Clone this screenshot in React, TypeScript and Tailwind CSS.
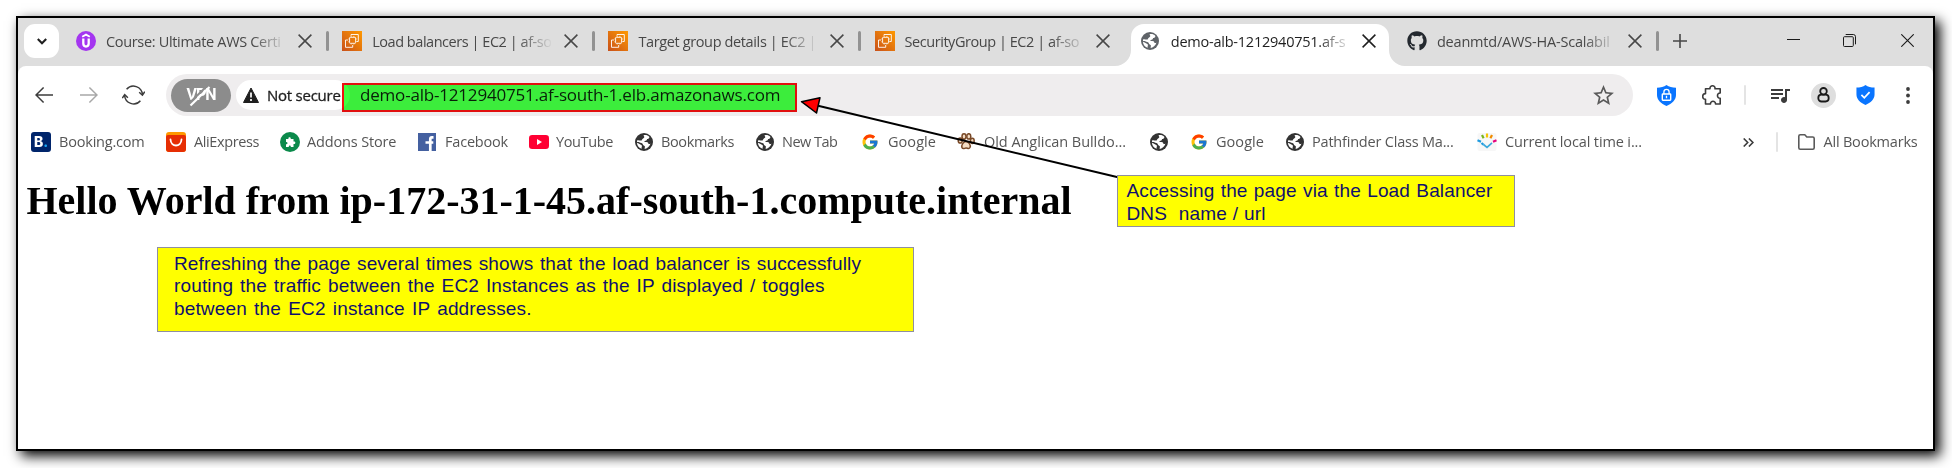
import type { ReactNode } from "react";
import { MdQueueMusic, MdStarOutline } from "react-icons/md";
import { FcGoogle } from "react-icons/fc";
import { FaGithub } from "react-icons/fa";

function Cross({ className }: { className: string }) {
  return (
    <svg viewBox="0 0 14 14" className={`block size-3.5 shrink-0 ${className}`} fill="none" stroke="currentColor" strokeWidth="1.5">
      <path d="M.6.6l12.8 12.8M13.4.6L.6 13.4" />
    </svg>
  );
}

function Globe({ className }: { className: string }) {
  return (
    <svg viewBox="0 0 18 18" className={`block size-[18px] shrink-0 ${className}`}>
      <circle cx="9" cy="9" r="9" fill="currentColor" />
      <path
        fill="#fff"
        d="M8.600 2.300C10.500 1.700 13 2.300 14.400 3.900c-.2 1.500-1 2.100-2.300 2.100-.3 1.500-1.200 2-2.600 1.900-.2 1.100.4 1.300 1.600 1.200 1.800-.1 2.200.8 2.400 1.900.8.300 1.500 0 2-.5-.9 2.800-2.900 4.800-5.700 5.400-.5-1 .3-1.600.1-2.500-.3-1-1.700-.8-2-2C7.600 9.900 5.500 9.800 4.300 9.200 3.500 8.800 2.700 8.900 1.900 9.300c.1-.9.300-1.700.6-2.400 1.200.4 2.300.8 3.700.7.8-.1.600-1.100 1.300-1.700.8-.7 1.900-.9 1.800-1.900 0-.6-.8-.8-.7-1.700z"
      />
      <path fill="#fff" d="M1.900 10c1.600-.1 2.600 1.200 4 1.700 1.200.4 1.300 1.400.8 2.300-.3.700-.1 1.300.1 1.800C4.100 15 2.200 12.800 1.900 10z" />
    </svg>
  );
}

function Udemy() {
  return (
    <svg viewBox="0 0 20 20" className="block size-5">
      <circle cx="10" cy="10" r="10" fill="#a435f0" />
      <path d="M6.200 5.800L10 3.600l3.800 2.200" fill="none" stroke="#fff" strokeWidth="1.800" />
      <path d="M7.300 7.600v5c0 3.900 5.400 3.900 5.400 0v-5" fill="none" stroke="#fff" strokeWidth="2.300" />
    </svg>
  );
}

function Ec2() {
  return (
    <svg viewBox="0 0 20 20" className="block size-5">
      <defs>
        <linearGradient id="ec2" x1="0" y1="1" x2="1" y2="0">
          <stop offset="0" stopColor="#c8511b" />
          <stop offset="1" stopColor="#f90" />
        </linearGradient>
      </defs>
      <path fill="url(#ec2)" d="M0 0h20v20H0z" />
      <g fill="none" stroke="#fff" strokeWidth="1" strokeOpacity=".9">
        <rect x="7.600" y="6.300" width="6" height="6" rx=".6" />
        <path d="M9 4.800V3.500h7.300v7h-1.400M6 9H3.500v7.300h7.200V14" />
        <path d="M9.200 5v1M11.800 5v1M13.900 8h1M13.900 10.500h1M6.300 8h1M6.300 10.800h1M9.200 12.600v1M11.800 12.600v1" strokeWidth=".7" />
      </g>
    </svg>
  );
}

type TabData = { title: string; tracking: string; icon: ReactNode };

const tabs: TabData[] = [
  { title: "Course: Ultimate AWS Certi", tracking: "tracking-[-0.33px]", icon: <Udemy /> },
  { title: "Load balancers | EC2 | af-so", tracking: "tracking-[-0.46px]", icon: <Ec2 /> },
  { title: "Target group details | EC2 |", tracking: "tracking-[-0.37px]", icon: <Ec2 /> },
  { title: "SecurityGroup | EC2 | af-so", tracking: "tracking-[-0.45px]", icon: <Ec2 /> },
  { title: "demo-alb-1212940751.af-s", tracking: "tracking-[-0.23px]", icon: <Globe className="text-[#5f6368]" /> },
  { title: "deanmtd/AWS-HA-Scalabil", tracking: "tracking-[-0.2px]", icon: <FaGithub className="size-5 text-[#24292f]" /> },
];

const ACTIVE = 4;

function Tab({ tab, index }: { tab: TabData; index: number }) {
  const active = index === ACTIVE;
  return (
    <div className="relative flex h-[48px] w-[266.2px] shrink-0 items-center pb-0.5 pl-3.5">
      {active && (
        <div className="absolute top-1.5 bottom-0 left-[4px] w-[258.5px] rounded-t-[13px] bg-white">
          <svg viewBox="0 0 16 16" className="absolute bottom-0 -left-4 block size-4"><path d="M16 0v16H0A16 16 0 0 0 16 0z" fill="#fff" /></svg>
          <svg viewBox="0 0 16 16" className="absolute -right-4 bottom-0 block size-4"><path d="M0 0v16h16A16 16 0 0 1 0 0z" fill="#fff" /></svg>
        </div>
      )}
      <div className="relative flex w-[30px] shrink-0 items-center">{tab.icon}</div>
      <div
        className={`relative mt-px w-[179px] shrink-0 text-[14.5px] leading-6 whitespace-nowrap [mask-image:linear-gradient(to_right,black_146px,transparent_181px)] ${tab.tracking} ${active ? "text-[#1f1f1f]" : "text-[#474747]"}`}
      >
        {tab.title}
      </div>
      <Cross className={`relative ml-[12.5px] ${active ? "text-[#1f1f1f]" : "text-[#474747]"}`} />
      {index !== ACTIVE && index !== ACTIVE - 1 && <span className="ml-[14px] h-5 w-[3px] shrink-0 rounded-full bg-[#929292]" />}
    </div>
  );
}

function TabStrip() {
  return (
    <div className="flex h-12 shrink-0 items-center bg-[#dedede]">
      <div className="mr-[3px] mb-0.5 ml-1.5 flex h-[34px] w-[35px] shrink-0 items-center justify-center rounded-[11px] bg-white">
        <svg viewBox="0 0 10 7" className="block h-[7px] w-2.5" fill="none" stroke="#1f1f1f" strokeWidth="2.1"><path d="M.8 1L5 5.2 9.2 1" /></svg>
      </div>
      {tabs.map((t, i) => (
        <Tab key={t.title} tab={t} index={i} />
      ))}
      <svg viewBox="0 0 14 14" className="mb-0.5 ml-[14px] block size-3.5 shrink-0" fill="none" stroke="#474747" strokeWidth="1.6"><path d="M7 0v14M0 7h14" /></svg>
      <div className="mr-[19px] mb-[3px] ml-auto flex items-center text-[#1a1a1a]">
        <svg viewBox="0 0 13 13" className="mr-[43px] block size-[13px]" stroke="currentColor"><path d="M0 5.5h13" /></svg>
        <svg viewBox="0 0 13 13" className="mr-[45px] block size-[13px]" fill="none" stroke="currentColor">
          <rect x=".5" y="2.7" width="9.8" height="9.8" rx="1" />
          <path d="M2.7.5h7.6a2.2 2.2 0 0 1 2.2 2.2v7.6" />
        </svg>
        <svg viewBox="0 0 13 13" className="block size-[13px]" fill="none" stroke="currentColor" strokeWidth="1.1"><path d="M.3.3l12.4 12.4M12.7.3L.3 12.7" /></svg>
      </div>
    </div>
  );
}

function Arrow({ className }: { className: string }) {
  return (
    <svg viewBox="0 0 18 16" className={`block h-4 w-[18px] shrink-0 ${className}`} fill="none" stroke="currentColor" strokeWidth="1.5"><path d="M18 8H1M8.6.5L1 8l7.6 7.500" /></svg>
  );
}

const SHIELD = "M9.5 0C12 1.9 15.3 2.6 19 2.7V10c0 5-4 8.700-9.500 11C4 18.700 0 15 0 10V2.700C3.700 2.600 7 1.900 9.500 0z";

function Toolbar() {
  return (
    <div className="bg-[#dedede]">
      <div className="flex h-[58px] items-center rounded-t-[8px] bg-white">
        <Arrow className="ml-[16.5px] text-[#3c3c3c]" />
        <Arrow className="ml-[27px] rotate-180 text-[#a8a8a8]" />
        <svg viewBox="0 0 23 20" className="ml-[24.5px] block h-5 w-[23px] shrink-0" fill="none" stroke="#3c3c3c" strokeWidth="1.500">
          <path d="M4.600 4.300A9 9 0 0 1 20.400 9.500M18.400 15.700A9 9 0 0 1 2.600 10.500" />
          <path d="M17.200 7.200l3.200 3 2.400-3.500M.300 13.200l2.400-3.500 3.200 3" />
        </svg>
        <div className="ml-[21px] flex h-[42px] w-[1467px] shrink-0 items-center rounded-full bg-[#efedee]">
          <div className="relative ml-[5px] flex h-[33px] w-[60px] shrink-0 items-center justify-center rounded-full bg-[#8c8c8c] font-['Roboto'] text-[16px] font-bold text-white">
            <span className="tracking-[-1px]">VPN</span>
            <svg viewBox="0 0 60 33" className="absolute inset-0 block h-full w-full" fill="none">
              <path d="M17.500 25L36.500 6.500" stroke="#8c8c8c" strokeWidth="2" />
              <path d="M19.500 26.500L38.500 8" stroke="#fff" strokeWidth="2.200" />
            </svg>
          </div>
          <div className="ml-[5px] flex h-[30px] w-[114px] shrink-0 items-center rounded-full bg-white pl-[7px] text-[15px] font-medium tracking-[-0.25px] whitespace-nowrap text-[#1f1f1f] [-webkit-text-stroke:0.3px_#1f1f1f]">
            <svg viewBox="0 0 16 16" className="mr-2 block size-4 shrink-0">
              <path d="M8 1L15.500 15.500H.500z" fill="#1f1f1f" stroke="#1f1f1f" strokeLinejoin="round" />
              <path d="M8 5.500v5M8 12v2" stroke="#fff" strokeWidth="1.700" />
            </svg>
            Not secure
          </div>
          <div className="ml-[10px] text-[17px] tracking-[-0.19px] text-[#1f1f1f]">demo-alb-1212940751.af-south-1.elb.amazonaws.com</div>
          <MdStarOutline className="mr-[17px] ml-auto size-[25px] text-[#5a5a5a]" />
        </div>
        <svg viewBox="0 0 19 21" className="ml-6 block h-[21px] w-[19px] shrink-0">
          <path d={SHIELD} fill="#0a75ff" />
          <rect x="5.300" y="9" width="8.400" height="6.200" rx=".6" fill="none" stroke="#fff" strokeWidth="1.400" />
          <path d="M6.900 9V7a2.600 2.600 0 0 1 5.200 0v2M9.500 10.800v2.500" fill="none" stroke="#fff" strokeWidth="1.300" />
        </svg>
        <svg viewBox="0 0 20 20" className="ml-[26px] block size-5 shrink-0" fill="none" stroke="#3c3c3c" strokeWidth="1.600" strokeLinejoin="round">
          <path d="M3.500 3.800H8C7.500-.2 13.600-.2 13 3.800h5.200V8c-3.600-.1-3.600 5.400 0 5.300V19h-4.700c.2-3.600-5.200-3.600-5 0H3.500v-4.800C-.2 14.500-.2 8.300 3.500 8.600z" />
        </svg>
        <span className="ml-[22px] h-5 w-[2px] shrink-0 rounded-full bg-[#e4e4e4]" />
        <MdQueueMusic className="mt-[-1px] ml-[22px] size-[24px] shrink-0 text-[#3c3c3c]" />
        <span className="ml-[19px] flex size-[25px] shrink-0 items-center justify-center rounded-full bg-[#dedede]">
          <svg viewBox="0 0 13 16" className="block h-4 w-[13px]" fill="none" stroke="#1a1a1a" strokeWidth="1.800">
            <circle cx="6.500" cy="4.300" r="3.300" />
            <rect x="1.300" y="7.700" width="10.400" height="6.800" rx="3.200" />
          </svg>
        </span>
        <svg viewBox="0 0 19 21" className="ml-[20px] block h-5 w-[19px] shrink-0">
          <path d={SHIELD} fill="#0a75ff" />
          <path d="M5.200 10.400l3 3 5.600-6" fill="none" stroke="#fff" strokeWidth="1.800" />
        </svg>
        <svg viewBox="0 0 4 17" className="ml-[31px] block h-[17px] w-1 shrink-0" fill="#3c3c3c">
          <circle cx="2" cy="2" r="1.900" /><circle cx="2" cy="8.500" r="1.900" /><circle cx="2" cy="15" r="1.900" />
        </svg>
      </div>
    </div>
  );
}

const globe = <Globe className="text-[#333]" />;
const google = <FcGoogle className="-ml-px size-[18px]" />;

const bookmarks: { label: string; icon: ReactNode; size: string; slot: string; tracking: string }[] = [
  {
    label: "Booking.com", size: "w-[135px]", slot: "w-[28px]", tracking: "tracking-[-0.2px]", icon: (
      <span className="flex size-5 items-center justify-center rounded-[3px] bg-[#00256b] font-['Inter'] text-[14px] leading-none font-extrabold text-white">B<span className="text-[#18a5f5]">.</span></span>
    ),
  },
  {
    label: "AliExpress", size: "w-[114px]", slot: "w-[28px]", tracking: "tracking-[-0.39px]", icon: (
      <svg viewBox="0 0 20 20" className="block size-5"><rect width="20" height="20" rx="3" fill="#ff9900" /><path d="M0 4.500Q0 3 2 3h16q2 0 2 1.500V17q0 3-3 3H3q-3 0-3-3z" fill="#e62e04" /><path d="M4.500 7.500c.5 8 10.500 8 11 0" fill="none" stroke="#fff" strokeWidth="1.800" strokeLinecap="round" /></svg>
    ),
  },
  {
    label: "Addons Store", size: "w-[138px]", slot: "w-[27px]", tracking: "tracking-[-0.15px]", icon: (
      <svg viewBox="0 0 20 20" className="block size-5"><circle cx="10" cy="10" r="10" fill="#0b8a4b" /><path d="M6 7h2.500C7.600 4.500 11.400 4.500 10.700 7h2.800v2.500c2.500-.8 2.500 3.100 0 2.400V15h-2.700c.4-2-2.400-2-2 0H6v-2.700c2 .4 2-2.700 0-2.300z" fill="#fff" /></svg>
    ),
  },
  {
    label: "Facebook", size: "w-[111px]", slot: "w-[27px]", tracking: "tracking-[-0.19px]", icon: (
      <svg viewBox="0 0 18 18" className="block size-[18px]"><path fill="#4460a0" d="M0 0h18v18H0z" /><path d="M15.500 4.300h-1.700c-1.300 0-1.500.7-1.500 1.600V18M7.500 9.500h7.800" fill="none" stroke="#fff" strokeWidth="2.700" /></svg>
    ),
  },
  {
    label: "YouTube", size: "w-[106px]", slot: "w-[27px]", tracking: "tracking-[-0.37px]", icon: (
      <svg viewBox="0 0 20 14" className="block h-3.5 w-5"><rect width="20" height="14" rx="3.200" fill="#ff0033" /><path d="M8 4l5 3-5 3z" fill="#fff" /></svg>
    ),
  },
  { label: "Bookmarks", size: "w-[121px]", slot: "w-[26px]", tracking: "tracking-[-0.38px]", icon: globe },
  { label: "New Tab", size: "w-[106px]", slot: "w-[26px]", tracking: "tracking-[-0.5px]", icon: globe },
  { label: "Google", size: "w-[95px]", slot: "w-[26px]", tracking: "tracking-[0.05px]", icon: google },
  {
    label: "Old Anglican Bulldo...", size: "w-[193px]", slot: "w-[27px]", tracking: "tracking-[-0.05px]", icon: (
      <svg viewBox="0 0 18 18" className="block size-[18px]" fill="#f3dcc4" stroke="#7a4a28" strokeWidth="1.500">
        <ellipse cx="3.200" cy="7.500" rx="2" ry="2.600" /><ellipse cx="7" cy="3.500" rx="2" ry="2.700" /><ellipse cx="11.800" cy="3.400" rx="2" ry="2.700" /><ellipse cx="15.300" cy="7.800" rx="1.900" ry="2.600" />
        <path d="M9 8.500c2.500 0 5.200 3.500 4 6-1 2-2.500.5-4 .6s-3 1.500-4-.4C4 12 6.500 8.500 9 8.500z" />
      </svg>
    ),
  },
  { label: "", size: "w-[41px]", slot: "w-[26px]", tracking: "tracking-normal", icon: globe },
  { label: "Google", size: "w-[95px]", slot: "w-[25px]", tracking: "tracking-[0.05px]", icon: google },
  { label: "Pathfinder Class Ma...", size: "w-[191px]", slot: "w-[26px]", tracking: "tracking-[-0.2px]", icon: globe },
  {
    label: "Current local time i...", size: "w-[190px]", slot: "w-[28px]", tracking: "tracking-[-0.13px]", icon: (
      <svg viewBox="0 0 20 20" className="block size-5" fill="none" strokeWidth="2.200">
        <rect x=".5" y="1" width="19" height="18" rx="2" fill="#f7f7f7" stroke="none" />
        <path d="M10 1.500v4" stroke="#f5c400" /><path d="M5 3l1.600 3.200" stroke="#7ab51d" /><path d="M15 3l-1.600 3.200" stroke="#f08a00" />
        <path d="M.5 8.300l3.500 1.500M4.500 11l2 1.800" stroke="#1e9be0" /><path d="M19.500 8.300L16 9.800" stroke="#e5007d" /><path d="M6.500 12.500L10 15.300l5-4.500" stroke="#3ba9dc" strokeWidth="1.700" />
      </svg>
    ),
  },
];

function BookmarksBar() {
  return (
    <div className="flex h-9 shrink-0 items-center pl-[13px] text-[14.5px] leading-6 whitespace-nowrap text-[#565656]">
      {bookmarks.map((b, i) => (
        <div key={i} className={`flex shrink-0 items-center ${b.size}`}>
          <div className={`flex shrink-0 items-center ${b.slot}`}>{b.icon}</div>
          <span className={b.tracking}>{b.label}</span>
        </div>
      ))}
      <svg viewBox="0 0 11 9" className="ml-[76px] block h-[9px] w-[11px] shrink-0" fill="none" stroke="#3c3c3c" strokeWidth="1.600"><path d="M.7.5l4 4-4 4M5.900.5l4 4-4 4" /></svg>
      <span className="ml-[22px] h-5 w-[2px] shrink-0 rounded-full bg-[#e4e4e4]" />
      <svg viewBox="0 0 17 16" className="mr-[9px] ml-[19.500px] block h-4 w-[17px] shrink-0" fill="none" stroke="#5a5a5a" strokeWidth="1.600" strokeLinejoin="round"><path d="M2.300.8h4.500l2 2.200h5.900q1.500 0 1.500 1.500v9.200q0 1.500-1.500 1.500H2.300Q.8 15.200.8 13.700V2.300Q.8.8 2.300.8z" /></svg>
      <span className="tracking-[-0.2px]">All Bookmarks</span>
    </div>
  );
}

export default function App() {
  return (
    <div className="relative h-[468px] w-[1952px] overflow-hidden bg-white p-4 font-['Open_Sans','Noto_Sans',sans-serif]">
      <div className="flex h-[435px] w-[1919px] flex-col overflow-hidden border-2 border-black bg-white shadow-[5px_5px_12px_rgba(0,0,0,1)]">
        <TabStrip />
        <Toolbar />
        <BookmarksBar />
        <h1 className="mt-[18px] ml-[8.500px] font-['Liberation_Serif',serif] text-[40px] leading-[46px] font-bold whitespace-nowrap text-black">
          Hello World from ip-172-31-1-45.af-south-1.compute.internal
        </h1>
      </div>

      <div className="absolute top-[83px] left-[342px] h-[29px] w-[455px] border-2 border-[#f01010] bg-[#40ff40] mix-blend-multiply" />
      <svg viewBox="0 0 330 90" className="absolute top-[92px] left-[795px] block h-[90px] w-[330px]">
        <path d="M22 13.500L324 85.500" stroke="#000" strokeWidth="2" />
        <path d="M6.500 9.700l18.500-4L21.500 21z" fill="#f00" stroke="#000" strokeWidth="1.500" strokeLinejoin="round" />
      </svg>

      <div className="absolute top-[175px] left-[1117px] h-[52px] w-[398px] border border-[#8f8fa0] bg-[#ff0] pt-[4px] pl-[8.500px] font-['Liberation_Sans',sans-serif] text-[19px] leading-[22.700px] tracking-[0.15px] whitespace-pre text-[#10106e]">
        <p className="[word-spacing:0.85px]">Accessing the page via the Load Balancer</p>
        <p className="[word-spacing:0.4px]">DNS  name / url</p>
      </div>
      <div className="absolute top-[247px] left-[157px] h-[85px] w-[757px] border border-[#8f8fa0] bg-[#ff0] pt-[4.500px] pl-4 font-['Liberation_Sans',sans-serif] text-[19px] leading-[22.700px] tracking-[0.15px] whitespace-pre text-[#10106e]">
        <p className="[word-spacing:1.200px]">Refreshing the page several times shows that the load balancer is successfully</p>
        <p className="[word-spacing:1.500px]">routing the traffic between the EC2 Instances as the IP displayed / toggles</p>
        <p className="[word-spacing:1.800px]">between the EC2 instance IP addresses.</p>
      </div>
    </div>
  );
}
